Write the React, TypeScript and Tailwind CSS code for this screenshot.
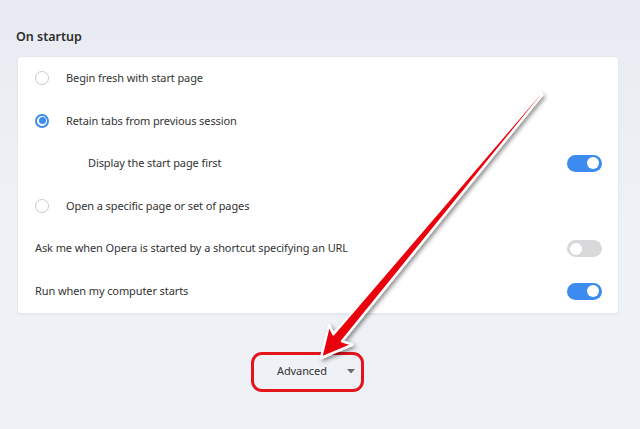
import React from "react";

function Radio({ checked }: { checked?: boolean }) {
  return checked ? (
    <span className="flex h-[14px] w-[14px] items-center justify-center rounded-full border-2 border-[#3d8bee] bg-white">
      <span className="h-[7px] w-[7px] rounded-full bg-[#3d8bee]" />
    </span>
  ) : (
    <span className="h-[14px] w-[14px] rounded-full border-[1.5px] border-[#c9c9c9] bg-white" />
  );
}

function Toggle({ on }: { on?: boolean }) {
  return on ? (
    <span className="flex h-[17px] w-[35px] items-center justify-end rounded-full bg-[#3d8bee] pr-[3px]">
      <span className="h-[12px] w-[12px] rounded-full bg-white" />
    </span>
  ) : (
    <span className="flex h-[17px] w-[35px] items-center justify-start rounded-full bg-[#d9d9db] pl-[3px]">
      <span className="h-[12px] w-[12px] rounded-full bg-white" />
    </span>
  );
}

export default function App() {
  const font = { fontFamily: '"Noto Sans", "Open Sans", sans-serif' };
  const row = "flex h-[42.6px] items-center text-[11px] tracking-[-0.1px]";
  return (
    <div
      className="relative h-[429px] w-[640px] overflow-hidden bg-gradient-to-b from-[#e8ecf2] via-[#eef1f6] to-[#eef1f6] text-[#333]"
      style={font}
    >
      <div className="pl-[17px] pt-[27px]">
        <div className="-ml-[1px] h-[20px] text-[12.5px] font-semibold leading-[20px] text-[#2e2e2e]">
          On startup
        </div>
        <div className="mt-[9px] w-[602px] rounded-[4px] border border-[#e4e7ec] bg-white shadow-[0_1px_1px_rgba(0,0,0,0.04)]">
          <div className={`${row} pl-[17px]`}>
            <Radio />
            <span className="ml-[17px]">Begin fresh with start page</span>
          </div>
          <div className={`${row} pl-[17px]`}>
            <Radio checked />
            <span className="ml-[17px]">Retain tabs from previous session</span>
          </div>
          <div className={`${row} justify-between pl-[70px] pr-[16px]`}>
            <span>Display the start page first</span>
            <Toggle on />
          </div>
          <div className={`${row} pl-[17px]`}>
            <Radio />
            <span className="ml-[17px]">Open a specific page or set of pages</span>
          </div>
          <div className={`${row} justify-between pl-[17px] pr-[16px]`}>
            <span>Ask me when Opera is started by a shortcut specifying an URL</span>
            <Toggle />
          </div>
          <div className={`${row} justify-between pl-[17px] pr-[16px]`}>
            <span>Run when my computer starts</span>
            <Toggle on />
          </div>
        </div>
      </div>

      <div className="mt-[38px] pl-[251px]">
        <div className="flex h-[40px] w-[113px] items-center rounded-[11px] border-[3px] border-[#e3141c] pl-[23px] text-[11px] tracking-[-0.1px] text-[#333]">
          <span>Advanced</span>
          <svg className="ml-[20px]" width="8" height="5" viewBox="0 0 8 5">
            <path d="M0 0 L8 0 L4 4.5 Z" fill="#6b6b6b" />
          </svg>
        </div>
      </div>

      <svg className="pointer-events-none absolute left-0 top-0" width="640" height="429" viewBox="0 0 640 429">
        <defs>
          <filter id="sh" x="-20%" y="-20%" width="140%" height="140%">
            <feDropShadow dx="2" dy="2" stdDeviation="2" floodColor="#000" floodOpacity="0.45" />
          </filter>
        </defs>
        <polygon
          points="321,358 352.5,344.6 342,341.2 542,95 540,93.4 333.4,334.3 329,325 "
          fill="#ea0008"
          stroke="#ffffff"
          strokeWidth="2.5"
          strokeLinejoin="round"
          filter="url(#sh)"
        />
      </svg>
    </div>
  );
}
